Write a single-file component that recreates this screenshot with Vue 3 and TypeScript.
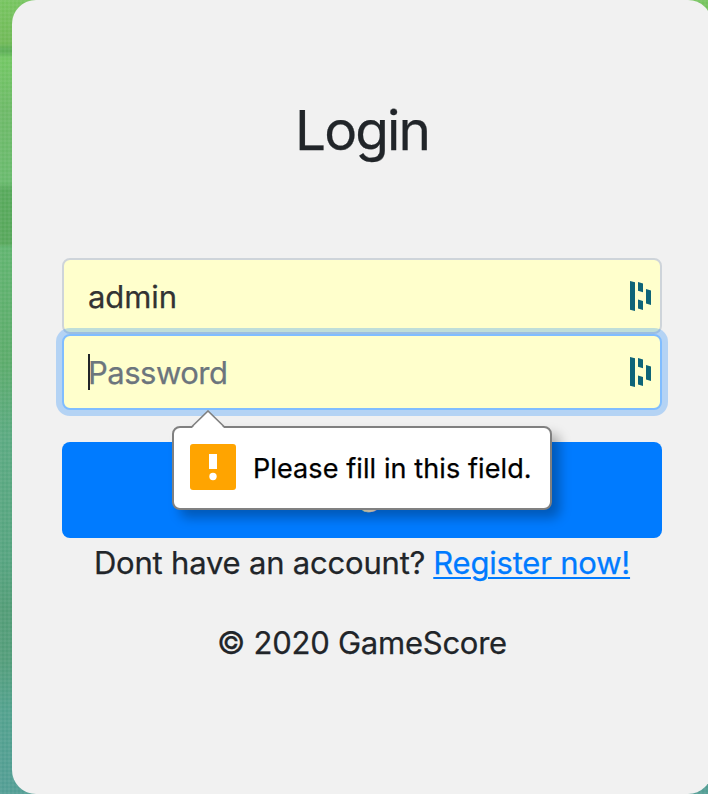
<script setup lang="ts">
import { ref } from 'vue'

const username = ref('admin')
const bars = ['M0 0L5 1.2V30L0 28.8Z', 'M8 1L13 2.4V11.3L8 9.7Z', 'M8 18.5L13 20V29L8 27.6Z', 'M16 8L21 9.5V24L16 22.6Z']
</script>

<template>
  <main class="page">
    <section class="card">
      <h1 class="title">Login</h1>
      <form class="form" @submit.prevent>
        <label class="field">
          <span class="value name">{{ username }}</span>
          <svg class="key" viewBox="0 0 21 30"><path v-for="d in bars" :key="d" :d="d" /></svg>
        </label>
        <label class="field focused">
          <span class="caret"></span>
          <span class="value placeholder">Password</span>
          <svg class="key" viewBox="0 0 21 30"><path v-for="d in bars" :key="d" :d="d" /></svg>
        </label>
        <button class="submit" type="submit">Login</button>
        <div class="tooltip" role="alert">
          <svg class="pointer" viewBox="0 0 34 18"><path class="fill" d="M1 18L17 1L33 18Z" /><path class="edge" d="M1 16.5L17 1L33 16.5" /></svg>
          <svg class="warning" viewBox="0 0 46 46">
            <rect width="46" height="46" rx="3" fill="#ffa400" />
            <path d="M19 10H27V25H19Z" fill="#fff" /><circle cx="23" cy="32.5" r="3.7" fill="#fff" />
          </svg>
          <span class="message">Please fill in this field.</span>
        </div>
      </form>
      <p class="register"><span class="ask">Dont have an account?</span><a href="#">Register now!</a></p>
      <p class="copyright">© 2020 GameScore</p>
    </section>
  </main>
</template>

<style>
body { overflow: hidden; }
</style>

<style scoped>
* { box-sizing: border-box; }
.page {
  width: 708px; height: 794px; overflow: hidden; padding-left: 12px;
  font-family: Inter, sans-serif; font-size: 31px; line-height: 48px; color: #212529;
  -webkit-text-stroke: .25px currentColor;
  background:
    repeating-linear-gradient(0deg, rgba(255,255,255,.045) 0 2px, transparent 2px 4px),
    repeating-linear-gradient(90deg, rgba(255,255,255,.045) 0 2px, transparent 2px 4px),
    linear-gradient(#76c45f 0, #70b957 43px, #5daf56 49px, #5daf56 52px, #72c763 58px, #6db967 110px, #69ba6d 182px, #57a95b 190px, #57a75b 244px, #60b46f 247px, #5bab6a 360px, #5aa981 440px, #55a37f 560px, #529c76 610px, #539d7a 660px, #52a18d 710px, #529d94 794px);
}
.card { width: 700px; height: 794px; padding: 94px 50px 0; background: #f1f1f1; border-radius: 24px; }
.title { margin: 0; height: 164px; font-size: 55px; line-height: 72px; font-weight: 400; text-align: center; letter-spacing: -1.9px; }
.form { position: relative; height: 281px; }
.field { position: relative; display: flex; align-items: center; width: 600px; height: 76px; padding: 0 9px 0 24px; border: 2px solid #ced4da; border-radius: 8px; background: #ffffcc; }
.focused { border-color: #80bdff; box-shadow: 0 0 0 6px rgba(0,123,255,.25); }
.value { flex: 1; padding-top: 2px; color: #333; letter-spacing: -.5px; }
.name { letter-spacing: -.1px; }
.placeholder { color: #6c757d; }
.caret { position: absolute; left: 24px; top: 18px; width: 2px; height: 36px; background: #212529; }
.key { width: 21px; height: 30px; fill: #0e6478; }
.submit { display: block; width: 600px; height: 96px; margin-top: 32px; padding: 0; border: 0; border-radius: 8px; background: #007bff; color: #fff2d2; font: 400 39px/60px Inter, sans-serif; letter-spacing: -1.3px; }
.tooltip { position: absolute; left: 110px; top: 168px; width: 380px; height: 84px; display: flex; align-items: center; padding: 0 16px 2px; gap: 17px; background: #fff; border: 2px solid #808080; border-radius: 8px; box-shadow: 8px 8px 12px rgba(0,0,0,.28); color: #000; font-size: 27px; }
.warning { width: 46px; height: 46px; flex: none; }
.pointer { position: absolute; left: 17px; top: -18px; width: 34px; height: 18px; }
.fill { fill: #fff; }
.edge { fill: none; stroke: #808080; stroke-width: 1.6; }
.message { padding-top: 3px; white-space: nowrap; letter-spacing: .1px; }
.register, .copyright { margin: 0; white-space: nowrap; display: flex; justify-content: center; }
.register { gap: 8px; letter-spacing: -.2px; }
.register a { color: #007bff; text-decoration: underline; text-decoration-thickness: 2px; text-underline-offset: 3px; }
.copyright { margin-top: 32px; letter-spacing: -.25px; }
</style>
